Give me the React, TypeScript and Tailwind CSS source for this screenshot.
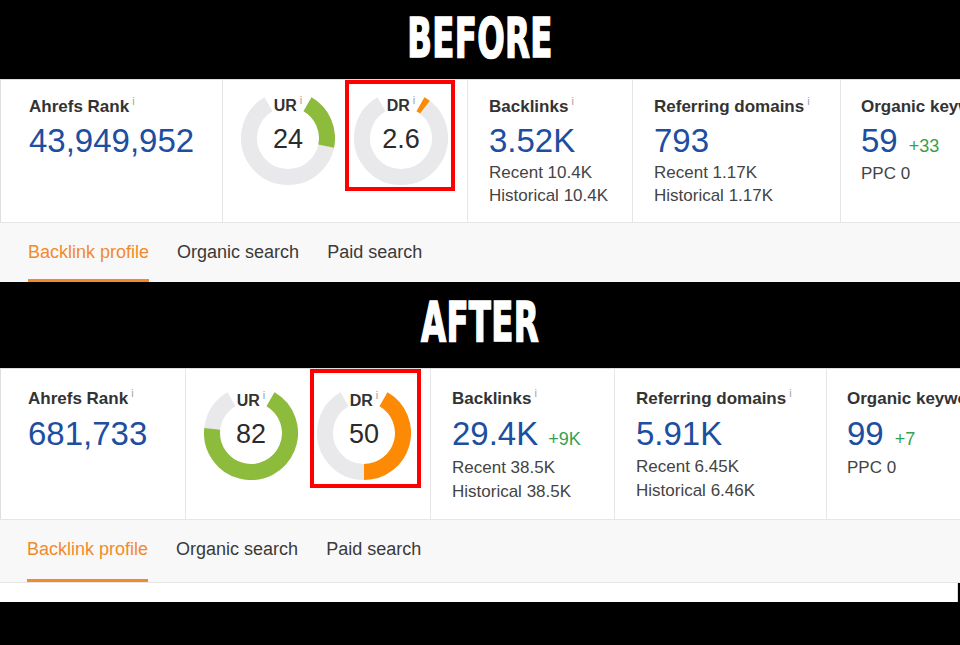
import React from 'react';

type Variant = 'before' | 'after';

interface PanelData {
  rank: string;
  ur: number;
  dr: number;
  backlinks: string;
  backlinksDelta?: string;
  blRecent: string;
  blHistorical: string;
  refDomains: string;
  rdRecent: string;
  rdHistorical: string;
  keywords: string;
  kwDelta: string;
  ppc: string;
}

const before: PanelData = {
  rank: '43,949,952',
  ur: 24,
  dr: 2.6,
  backlinks: '3.52K',
  blRecent: '10.4K',
  blHistorical: '10.4K',
  refDomains: '793',
  rdRecent: '1.17K',
  rdHistorical: '1.17K',
  keywords: '59',
  kwDelta: '+33',
  ppc: '0',
};

const after: PanelData = {
  rank: '681,733',
  ur: 82,
  dr: 50,
  backlinks: '29.4K',
  backlinksDelta: '+9K',
  blRecent: '38.5K',
  blHistorical: '38.5K',
  refDomains: '5.91K',
  rdRecent: '6.45K',
  rdHistorical: '6.46K',
  keywords: '99',
  kwDelta: '+7',
  ppc: '0',
};

// per-panel spacing, the two screenshots are not cropped identically
const look = {
  before: {
    row: 'h-[143px]',
    cols: ['w-[222px] pl-[28px]', 'w-[245px]', 'w-[165px] pl-[21px]', 'w-[208px] pl-[21px]'],
    pad: 'pt-[17px]',
    valueGap: 'mt-[5px]',
    sub: 'mt-[2px] leading-[23px]',
    gaugePad: 'pt-[11px]',
    box: '-left-[9px] -top-[11px] -right-[7px] -bottom-[6px]',
    tabs: 'h-[60px] pl-[28px]',
    tab: 'pt-[2px]',
  },
  after: {
    row: 'h-[151px]',
    cols: ['w-[185px] pl-[27px]', 'w-[245px]', 'w-[184px] pl-[21px]', 'w-[212px] pl-[21px]'],
    pad: 'pt-[20px]',
    valueGap: 'mt-[6px]',
    sub: 'mt-[3px] leading-[24px]',
    gaugePad: 'pt-[17px]',
    box: '-left-[7px] -top-[17px] -right-[10px] -bottom-[8px]',
    tabs: 'h-[64px] pl-[27px] border-b border-[#e4e4e4]',
    tab: 'pt-0',
  },
};

const InfoMark = () => (
  <span className="relative -top-[7px] ml-[3px] text-[11px] font-normal text-[#a0a0a0]">i</span>
);

const Label = ({ text, info = true }: { text: string; info?: boolean }) => (
  <div className="text-[17px] font-bold leading-[20px] text-[#333] whitespace-nowrap">
    {text}
    {info && <InfoMark />}
  </div>
);

function arc(a0: number, a1: number) {
  const cx = 47;
  const cy = 47;
  const r = 39;
  const rad = (a: number) => (a * Math.PI) / 180;
  const x0 = cx + r * Math.sin(rad(a0));
  const y0 = cy - r * Math.cos(rad(a0));
  const x1 = cx + r * Math.sin(rad(a1));
  const y1 = cy - r * Math.cos(rad(a1));
  const large = a1 - a0 > 180 ? 1 : 0;
  return `M ${x0} ${y0} A ${r} ${r} 0 ${large} 1 ${x1} ${y1}`;
}

const Gauge = ({
  label,
  value,
  color,
  box,
}: {
  label: string;
  value: number;
  color: string;
  box?: string;
}) => (
  <div className="relative h-[94px] w-[94px] shrink-0">
    <svg width="94" height="94" viewBox="0 0 94 94" className="block">
      <path d={arc(30, 330)} fill="none" stroke="#e9e9eb" strokeWidth={16} />
      <path d={arc(30, 30 + value * 3)} fill="none" stroke={color} strokeWidth={16} />
    </svg>
    <div className="absolute left-0 right-0 top-[6px] text-center text-[16px] font-bold leading-[18px] text-[#333]">
      {label}
      <InfoMark />
    </div>
    <div className="absolute inset-0 flex items-center justify-center pt-[3px] text-[27px] leading-none text-[#2b2b2b]">
      {value}
    </div>
    {box && <div className={`absolute border-[4px] border-[#f00] ${box}`}></div>}
  </div>
);

const Panel = ({ data, variant }: { data: PanelData; variant: Variant }) => {
  const s = look[variant];
  return (
    <div className="w-[1100px] bg-white">
      {/* stats row */}
      <div className={`flex border-t border-l border-[#dedede] ${s.row}`}>
        <div className={`border-r border-[#e6e6e6] ${s.cols[0]} ${s.pad}`}>
          <Label text="Ahrefs Rank" />
          <div className={`text-[33px] leading-[36px] text-[#1d4e9f] ${s.valueGap}`}>{data.rank}</div>
        </div>

        <div className={`flex gap-[19px] border-r border-[#e6e6e6] px-[18px] ${s.cols[1]} ${s.gaugePad}`}>
          <Gauge label="UR" value={data.ur} color="#8dbb3c" />
          <Gauge label="DR" value={data.dr} color="#fd8a05" box={s.box} />
        </div>

        <div className={`border-r border-[#e6e6e6] ${s.cols[2]} ${s.pad}`}>
          <Label text="Backlinks" />
          <div className={`flex items-baseline ${s.valueGap}`}>
            <span className="text-[33px] leading-[36px] text-[#1d4e9f]">{data.backlinks}</span>
            {data.backlinksDelta && (
              <span className="ml-[10px] text-[18px] text-[#36a050]">{data.backlinksDelta}</span>
            )}
          </div>
          <div className={`text-[17px] text-[#444] whitespace-nowrap ${s.sub}`}>
            <div>Recent {data.blRecent}</div>
            <div>Historical {data.blHistorical}</div>
          </div>
        </div>

        <div className={`border-r border-[#e6e6e6] ${s.cols[3]} ${s.pad}`}>
          <Label text="Referring domains" />
          <div className={`text-[33px] leading-[36px] text-[#1d4e9f] ${s.valueGap}`}>{data.refDomains}</div>
          <div className={`text-[17px] text-[#444] whitespace-nowrap ${s.sub}`}>
            <div>Recent {data.rdRecent}</div>
            <div>Historical {data.rdHistorical}</div>
          </div>
        </div>

        <div className={`pl-[20px] ${s.pad}`}>
          <Label text="Organic keywords" />
          <div className={`flex items-baseline ${s.valueGap}`}>
            <span className="text-[33px] leading-[36px] text-[#1d4e9f]">{data.keywords}</span>
            <span className="ml-[11px] text-[18px] text-[#36a050]">{data.kwDelta}</span>
          </div>
          <div className={`text-[17px] text-[#444] ${s.sub}`}>PPC {data.ppc}</div>
        </div>
      </div>

      {/* tabs */}
      <div className={`flex gap-[28px] border-t border-[#e6e6e6] bg-[#f8f8f8] text-[18px] ${s.tabs}`}>
        <div className={`flex items-center border-b-[3px] border-[#f28a2b] text-[#f28a2b] ${s.tab}`}>
          Backlink profile
        </div>
        <div className={`flex items-center border-b-[3px] border-transparent text-[#3a3a3a] ${s.tab}`}>
          Organic search
        </div>
        <div className={`flex items-center border-b-[3px] border-transparent text-[#3a3a3a] ${s.tab}`}>
          Paid search
        </div>
      </div>
    </div>
  );
};

const Banner = ({ text, className }: { text: string; className: string }) => (
  <div className={`flex justify-center bg-black ${className}`}>
    <span
      className="inline-block scale-y-[1.55] text-[36px] font-bold leading-none tracking-[0.3px] text-white [-webkit-text-stroke:1px_white]"
      style={{ fontFamily: '"Liberation Sans Narrow", "DejaVu Sans Condensed", sans-serif', fontStretch: 'condensed' }}
    >
      {text}
    </span>
  </div>
);

export default function App() {
  return (
    <div
      className="h-[645px] w-[960px] overflow-hidden bg-black"
      style={{ fontFamily: '"Liberation Sans", Arial, sans-serif' }}
    >
      <Banner text="BEFORE" className="h-[79px] items-center pb-[3px]" />
      <Panel data={before} variant="before" />
      <Banner text="AFTER" className="h-[86px] items-center pb-[6px]" />
      <Panel data={after} variant="after" />
      <div className="h-[19px] w-[958px] border-r border-[#dcdcdc] bg-white"></div>
    </div>
  );
}
